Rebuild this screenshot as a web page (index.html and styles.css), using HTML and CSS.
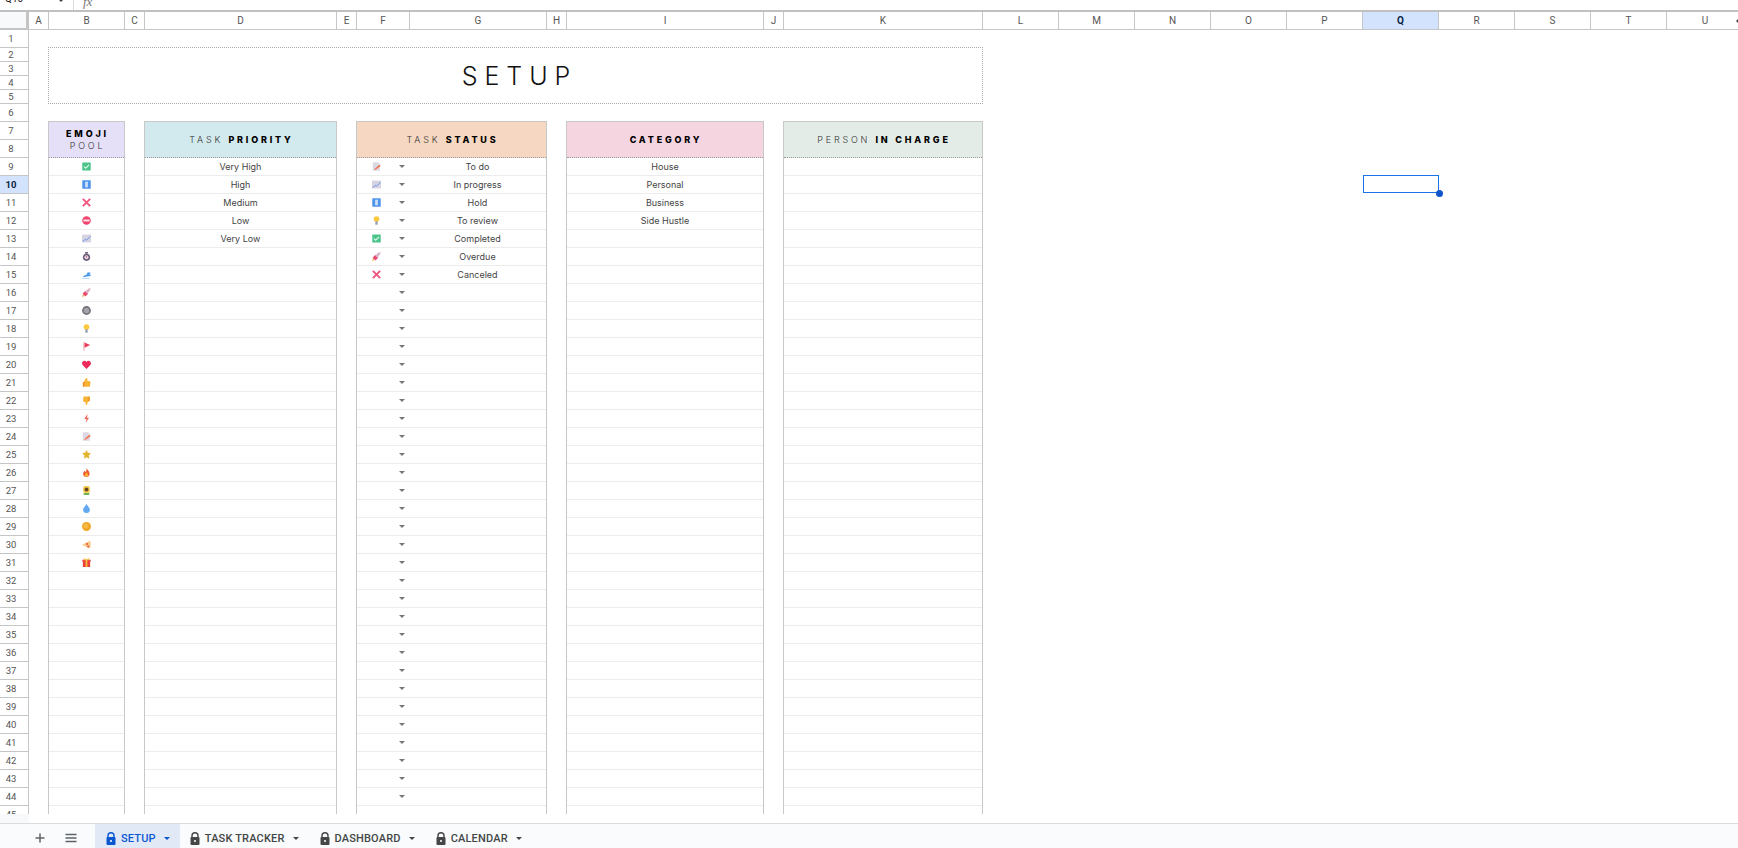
FILE: index.html
```html
<!DOCTYPE html>
<html lang="en">
<head>
<meta charset="utf-8">
<title>Setup</title>
<link rel="stylesheet" href="styles.css">
</head>
<body>
<svg class="defs" aria-hidden="true">
  <symbol id="i-check" viewBox="0 0 16 16"><rect x="0.500" y="1" width="15" height="14" rx="1" fill="#4cc38a"/><path d="M3.500 8l3 3 6-6" fill="none" stroke="#e8fff2" stroke-width="1.800"/></symbol>
  <symbol id="i-pause" viewBox="0 0 16 16"><rect x="0.500" y="0.500" width="15" height="15" rx="1" fill="#4f94ea"/><rect x="5.500" y="3" width="5" height="10" fill="#c9dffb"/></symbol>
  <symbol id="i-x" viewBox="0 0 16 16"><path d="M1.500 1.500l13 13M14.500 1.500l-13 13" stroke="#f2587f" stroke-width="3.600" fill="none"/></symbol>
  <symbol id="i-stop" viewBox="0 0 16 16"><circle cx="8" cy="8" r="7.600" fill="#f0456f"/><rect x="2.500" y="6.300" width="11" height="3.400" fill="#fde4ea"/></symbol>
  <symbol id="i-chart" viewBox="0 0 16 16"><rect x="0" y="1" width="16" height="14" fill="#d8d3e2"/><path d="M1 13.500l5-4 2 1.500 7-7" fill="none" stroke="#5a8ee8" stroke-width="1.600"/></symbol>
  <symbol id="i-watch" viewBox="0 0 16 16"><rect x="5.500" y="0" width="5" height="3" fill="#6b5c78"/><circle cx="8" cy="9.500" r="6.400" fill="#6b5c78"/><circle cx="8" cy="9.500" r="3.600" fill="#e2d6e2"/><path d="M8 9.500V7" stroke="#d8446a" stroke-width="1.500"/></symbol>
  <symbol id="i-shoe" viewBox="0 0 16 16"><path d="M0.500 13l5-4 3-1 1.500-4 5.500 1-2 3 2 1v1.500l-6 1z" fill="#4d9cec"/><path d="M1 15h12" stroke="#a9cff5" stroke-width="1.500"/></symbol>
  <symbol id="i-rocket" viewBox="0 0 16 16"><path d="M1 10l5-5 5 5-5 5z" fill="#ea4a70"/><path d="M5.500 6l5.500-4.500 4.500-1.500-1.500 4.500-4.500 5.500z" fill="#d9b4c8"/><path d="M0 16l2-4.500 2.500 2.500z" fill="#f3a13a"/></symbol>
  <symbol id="i-circle" viewBox="0 0 16 16"><circle cx="8" cy="8" r="7.800" fill="#6f6f78"/><circle cx="8" cy="8" r="5" fill="#a3a3aa"/></symbol>
  <symbol id="i-bulb" viewBox="0 0 16 16"><circle cx="8" cy="5.500" r="5" fill="#fcc83e"/><rect x="6" y="9.500" width="4" height="6" fill="#8f9db5"/></symbol>
  <symbol id="i-flag" viewBox="0 0 16 16"><rect x="2.500" y="0.500" width="2" height="15" fill="#f3a8a8"/><path d="M4.500 1l10 4.500-10 4.500z" fill="#ec3a5c"/></symbol>
  <symbol id="i-heart" viewBox="0 0 16 16"><path d="M8 16L1 9C-1.500 5 1.500 1 5 1.500 6.500 1.700 7.500 2.500 8 3.500 8.500 2.500 9.500 1.700 11 1.500 14.500 1 17.500 5 15 9z" fill="#ee2a5c"/></symbol>
  <symbol id="i-up" viewBox="0 0 16 16"><path d="M7 0l2.500 1v4.500H14l1 2-1 8H4.500l-1-1V6.500z" fill="#f7b334"/><rect x="1.500" y="7" width="3" height="8.500" fill="#ef8c2c"/></symbol>
  <symbol id="i-down" viewBox="0 0 16 16"><path d="M2.500 1H11l2.500 1v7l-3.500 2-1 5-2.500-1v-4.500H3L2 8.500z" fill="#f7b334"/><rect x="10.500" y="1" width="3.500" height="8" fill="#ef9c2c"/></symbol>
  <symbol id="i-bolt" viewBox="0 0 16 16"><path d="M9.500 0L4 9h4l-1.500 7 6-9.500H9z" fill="#f0695a"/></symbol>
  <symbol id="i-memo" viewBox="0 0 16 16"><path d="M1.500 0.500h9.500l3 3v12H1.500z" fill="#dcd8e4"/><path d="M5 12l8-7 2.500 2-8 6-3.500 1.500z" fill="#f0704a"/></symbol>
  <symbol id="i-star" viewBox="0 0 16 16"><path d="M8 0l2.500 5 5.500.8-4 3.900 1.200 5.800L8 12.800l-4.700 2.700 1.200-5.800-4.500-3.900 5.500-.8z" fill="#e3b52c"/></symbol>
  <symbol id="i-fire" viewBox="0 0 16 16"><path d="M8 0c1 3 5.500 5 5.500 10 0 3.500-2.800 6-5.800 6S2 13.500 2 10.500C2 8 3.500 7 4 5c1 .5 1.500 1.500 2 2.500C7.500 6 8.500 3 8 0z" fill="#ee5a32"/><path d="M8 7.500c.5 1.500 3 2.500 3 5s-2 3.200-3.500 3.200-3-1.200-2.500-3.200S7.500 9.500 8 7.500z" fill="#f9b233"/></symbol>
  <symbol id="i-sun" viewBox="0 0 16 16"><rect x="2" y="0" width="12" height="12.500" rx="3" fill="#f4cf52"/><circle cx="8" cy="6.300" r="3.500" fill="#6a4322"/><rect x="3" y="12.500" width="10" height="3.500" fill="#6db25a"/></symbol>
  <symbol id="i-drop" viewBox="0 0 16 16"><path d="M8 0c2 4 6 6.500 6 10.300A6 5.700 0 0 1 2 10.300C2 6.500 6 4 8 0z" fill="#62a9f2"/></symbol>
  <symbol id="i-orange" viewBox="0 0 16 16"><circle cx="8" cy="8" r="7.900" fill="#f1a628"/><circle cx="7" cy="7" r="4" fill="#f6bb45"/></symbol>
  <symbol id="i-pizza" viewBox="0 0 16 16"><path d="M0 8.500L14 1.500c2 4 2 9 0 13.500z" fill="#f8c98a"/><circle cx="9" cy="7" r="1.700" fill="#e8503a"/><circle cx="11" cy="11.500" r="1.700" fill="#e8503a"/></symbol>
  <symbol id="i-gift" viewBox="0 0 16 16"><rect x="1.500" y="5" width="13" height="11" fill="#e9423a"/><rect x="0.500" y="3" width="15" height="3.500" fill="#f04f3f"/><rect x="6.500" y="3" width="3" height="13" fill="#f7c23a"/><path d="M3.500 0l4.500 2.500L12.500 0v3h-9z" fill="#f7c23a"/></symbol>
  <symbol id="i-lock" viewBox="0 0 10 13"><path d="M2 5.500V3.700a3 3 0 0 1 6 0v1.800" fill="none" stroke="currentColor" stroke-width="1.400"/><rect x="0.500" y="5" width="9" height="8" rx="1" fill="currentColor"/><circle cx="5" cy="9" r="1" fill="#fff"/></symbol>
</svg>

<div class="app">
  <div class="topbar">
    <div class="namebox"><span class="namebox-text">Q10</span><span class="namebox-caret"></span></div>
    <div class="fx"><em>fx</em></div>
  </div>

  <div class="colhead">
    <div class="corner"></div>
    <div class="ch w20">A</div><div class="ch w76">B</div><div class="ch w20">C</div><div class="ch w192">D</div>
    <div class="ch w20">E</div><div class="ch w53">F</div><div class="ch w137">G</div><div class="ch w20">H</div>
    <div class="ch w197">I</div><div class="ch w20">J</div><div class="ch w199">K</div><div class="ch w76">L</div>
    <div class="ch w76">M</div><div class="ch w76">N</div><div class="ch w76">O</div><div class="ch w76">P</div>
    <div class="ch w76 ch-on">Q</div><div class="ch w76">R</div><div class="ch w76">S</div><div class="ch w76">T</div>
    <div class="ch w76 ch-last">U<span class="scroll-arrow"></span></div>
  </div>

  <div class="main">
    <div class="rownums">
      <div class="rn">1</div><div class="rn rn-s">2</div><div class="rn rn-s">3</div><div class="rn rn-s">4</div><div class="rn rn-s">5</div>
      <div class="rn">6</div><div class="rn">7</div><div class="rn">8</div><div class="rn">9</div><div class="rn rn-on">10</div>
      <div class="rn">11</div><div class="rn">12</div><div class="rn">13</div><div class="rn">14</div><div class="rn">15</div>
      <div class="rn">16</div><div class="rn">17</div><div class="rn">18</div><div class="rn">19</div><div class="rn">20</div>
      <div class="rn">21</div><div class="rn">22</div><div class="rn">23</div><div class="rn">24</div><div class="rn">25</div>
      <div class="rn">26</div><div class="rn">27</div><div class="rn">28</div><div class="rn">29</div><div class="rn">30</div>
      <div class="rn">31</div><div class="rn">32</div><div class="rn">33</div><div class="rn">34</div><div class="rn">35</div>
      <div class="rn">36</div><div class="rn">37</div><div class="rn">38</div><div class="rn">39</div><div class="rn">40</div>
      <div class="rn">41</div><div class="rn">42</div><div class="rn">43</div><div class="rn">44</div><div class="rn">45</div>
    </div>

    <div class="canvas">
      <div class="title">SETUP</div>
      <div class="tables">
        <section class="tbl tbl-emoji">
          <header class="th th-lilac"><div><b>EMOJI</b><br><span>POOL</span></div></header>
          <div class="rows">
            <div class="row"><svg class="ico"><use href="#i-check"/></svg></div>
            <div class="row"><svg class="ico"><use href="#i-pause"/></svg></div>
            <div class="row"><svg class="ico"><use href="#i-x"/></svg></div>
            <div class="row"><svg class="ico"><use href="#i-stop"/></svg></div>
            <div class="row"><svg class="ico"><use href="#i-chart"/></svg></div>
            <div class="row"><svg class="ico"><use href="#i-watch"/></svg></div>
            <div class="row"><svg class="ico"><use href="#i-shoe"/></svg></div>
            <div class="row"><svg class="ico"><use href="#i-rocket"/></svg></div>
            <div class="row"><svg class="ico"><use href="#i-circle"/></svg></div>
            <div class="row"><svg class="ico"><use href="#i-bulb"/></svg></div>
            <div class="row"><svg class="ico"><use href="#i-flag"/></svg></div>
            <div class="row"><svg class="ico"><use href="#i-heart"/></svg></div>
            <div class="row"><svg class="ico"><use href="#i-up"/></svg></div>
            <div class="row"><svg class="ico"><use href="#i-down"/></svg></div>
            <div class="row"><svg class="ico"><use href="#i-bolt"/></svg></div>
            <div class="row"><svg class="ico"><use href="#i-memo"/></svg></div>
            <div class="row"><svg class="ico"><use href="#i-star"/></svg></div>
            <div class="row"><svg class="ico"><use href="#i-fire"/></svg></div>
            <div class="row"><svg class="ico"><use href="#i-sun"/></svg></div>
            <div class="row"><svg class="ico"><use href="#i-drop"/></svg></div>
            <div class="row"><svg class="ico"><use href="#i-orange"/></svg></div>
            <div class="row"><svg class="ico"><use href="#i-pizza"/></svg></div>
            <div class="row"><svg class="ico"><use href="#i-gift"/></svg></div>
          </div>
        </section>

        <section class="tbl tbl-priority">
          <header class="th th-teal"><div><span>TASK</span> <b>PRIORITY</b></div></header>
          <div class="rows">
            <div class="row">Very High</div>
            <div class="row">High</div>
            <div class="row">Medium</div>
            <div class="row">Low</div>
            <div class="row">Very Low</div>
          </div>
        </section>

        <section class="tbl tbl-status">
          <header class="th th-peach"><div><span>TASK</span> <b>STATUS</b></div></header>
          <div class="rows">
            <div class="srow"><svg class="ico"><use href="#i-memo"/></svg><i class="caret"></i><span class="stext">To do</span></div>
            <div class="srow"><svg class="ico"><use href="#i-chart"/></svg><i class="caret"></i><span class="stext">In progress</span></div>
            <div class="srow"><svg class="ico"><use href="#i-pause"/></svg><i class="caret"></i><span class="stext">Hold</span></div>
            <div class="srow"><svg class="ico"><use href="#i-bulb"/></svg><i class="caret"></i><span class="stext">To review</span></div>
            <div class="srow"><svg class="ico"><use href="#i-check"/></svg><i class="caret"></i><span class="stext">Completed</span></div>
            <div class="srow"><svg class="ico"><use href="#i-rocket"/></svg><i class="caret"></i><span class="stext">Overdue</span></div>
            <div class="srow"><svg class="ico"><use href="#i-x"/></svg><i class="caret"></i><span class="stext">Canceled</span></div>
            <div class="srow"><i class="caret caret-empty"></i></div><div class="srow"><i class="caret caret-empty"></i></div><div class="srow"><i class="caret caret-empty"></i></div>
            <div class="srow"><i class="caret caret-empty"></i></div><div class="srow"><i class="caret caret-empty"></i></div><div class="srow"><i class="caret caret-empty"></i></div>
            <div class="srow"><i class="caret caret-empty"></i></div><div class="srow"><i class="caret caret-empty"></i></div><div class="srow"><i class="caret caret-empty"></i></div>
            <div class="srow"><i class="caret caret-empty"></i></div><div class="srow"><i class="caret caret-empty"></i></div><div class="srow"><i class="caret caret-empty"></i></div>
            <div class="srow"><i class="caret caret-empty"></i></div><div class="srow"><i class="caret caret-empty"></i></div><div class="srow"><i class="caret caret-empty"></i></div>
            <div class="srow"><i class="caret caret-empty"></i></div><div class="srow"><i class="caret caret-empty"></i></div><div class="srow"><i class="caret caret-empty"></i></div>
            <div class="srow"><i class="caret caret-empty"></i></div><div class="srow"><i class="caret caret-empty"></i></div><div class="srow"><i class="caret caret-empty"></i></div>
            <div class="srow"><i class="caret caret-empty"></i></div><div class="srow"><i class="caret caret-empty"></i></div><div class="srow"><i class="caret caret-empty"></i></div>
            <div class="srow"><i class="caret caret-empty"></i></div><div class="srow"><i class="caret caret-empty"></i></div><div class="srow"><i class="caret caret-empty"></i></div>
            <div class="srow"><i class="caret caret-empty"></i></div><div class="srow"><i class="caret caret-empty"></i></div>
          </div>
        </section>

        <section class="tbl tbl-category">
          <header class="th th-pink"><div><b>CATEGORY</b></div></header>
          <div class="rows">
            <div class="row">House</div>
            <div class="row">Personal</div>
            <div class="row">Business</div>
            <div class="row">Side Hustle</div>
          </div>
        </section>

        <section class="tbl tbl-person">
          <header class="th th-sage"><div><span>PERSON</span> <b>IN CHARGE</b></div></header>
          <div class="rows"></div>
        </section>
      </div>
    </div>
  </div>

  <div class="gutter"><div class="gutter-left"></div></div>

  <div class="tabbar">
    <div class="tb-add">
      <svg class="tb-ico" viewBox="0 0 12 12"><path d="M6 1.500v9M1.500 6h9" stroke="#5f6368" stroke-width="1.500" fill="none"/></svg>
    </div>
    <div class="tb-menu">
      <svg class="tb-ico" viewBox="0 0 12 12"><path d="M.5 2.500h11M.5 6h11M.5 9.500h11" stroke="#5f6368" stroke-width="1.300" fill="none"/></svg>
    </div>
    <div class="tab tab-on"><svg class="lock"><use href="#i-lock"/></svg><span>SETUP</span><i class="tab-caret"></i></div>
    <div class="tab"><svg class="lock"><use href="#i-lock"/></svg><span>TASK TRACKER</span><i class="tab-caret"></i></div>
    <div class="tab"><svg class="lock"><use href="#i-lock"/></svg><span>DASHBOARD</span><i class="tab-caret"></i></div>
    <div class="tab"><svg class="lock"><use href="#i-lock"/></svg><span>CALENDAR</span><i class="tab-caret"></i></div>
  </div>

  <div class="selection"><span class="handle"></span></div>
</div>
</body>
</html>
```

FILE: styles.css
```css
* { box-sizing: border-box; }
html, body { margin: 0; padding: 0; background: #fff; }
.defs { position: absolute; width: 0; height: 0; }
.app { position: relative; width: 1738px; height: 848px; overflow: hidden; display: flex; flex-direction: column; font-family: "Inter", "Liberation Sans", sans-serif; color: #3c3c3c; }

/* formula bar sliver */
.topbar { height: 10px; display: flex; overflow: hidden; flex: none; }
.namebox { width: 74px; position: relative; border-right: 1px solid #dadce0; font: 10px "Roboto", sans-serif; color: #222; }
.namebox-text { position: absolute; left: 5px; top: -7px; }
.namebox-caret { position: absolute; left: 59px; top: 0; border: 2.5px solid transparent; border-top-color: #444; }
.fx { padding-left: 9px; font: italic 13px "Liberation Serif", serif; color: #777; margin-top: -6px; }
.fx em { font-style: italic; }

/* column letters */
.colhead { height: 20px; flex: none; display: flex; border-top: 2px solid #c0c0c0; border-bottom: 1px solid #c6c6c6; background: #fff; }
.corner { width: 29px; flex: none; background: #f8f9fa; border-right: 3px solid #c4c4c4; border-bottom: 2px solid #c4c4c4; margin-bottom: -1px; }
.ch { flex: none; display: flex; align-items: center; justify-content: center; border-right: 1px solid #c6c6c6; font: 10px "Roboto", "Liberation Sans", sans-serif; color: #555; }
.ch-on { background: #d3e3fd; color: #0b1f44; font-weight: 700; }
.ch-last { border-right: 0; position: relative; }
.scroll-arrow { position: absolute; right: 3px; top: 5px; border: 4px solid transparent; border-right-color: #444; border-left-width: 0; }
.w20 { width: 20px; } .w53 { width: 53px; } .w76 { width: 76px; } .w137 { width: 137px; }
.w192 { width: 192px; } .w197 { width: 197px; } .w199 { width: 199px; }

/* body */
.main { height: 784px; flex: none; display: flex; overflow: hidden; }
.rownums { width: 29px; flex: none; border-right: 1px solid #c6c6c6; }
.rn { height: 18px; padding-right: 6px; display: flex; align-items: center; justify-content: center; border-bottom: 1px solid #c6c6c6; font: 9.500px "Roboto", "Liberation Sans", sans-serif; color: #555; }
.rn-s { height: 14px; }
.rn-on { background: #d3e3fd; color: #0b1f44; font-weight: 700; }

.canvas { flex: 1; padding-left: 19px; min-width: 0; }
.title { width: 935px; height: 57px; margin-top: 17px; padding-left: 8px; border: 1px dotted #a8a8a8; display: flex; align-items: center; justify-content: center; font-family: "Inter", sans-serif; font-weight: 300; font-size: 25px; letter-spacing: 7px; color: #111; }
.tables { display: flex; gap: 19px; margin-top: 17px; align-items: flex-start; }
.tbl { border: 1px solid #c8c8c8; border-bottom: 0; flex: none; }
.tbl-emoji { width: 77px; } .tbl-priority { width: 193px; } .tbl-status { width: 191px; }
.tbl-category { width: 198px; } .tbl-person { width: 200px; }

.th { height: 36px; padding-left: 2px; border-bottom: 1px dotted #9a9a9a; display: flex; align-items: center; justify-content: center; text-align: center; font-size: 9px; line-height: 12px; letter-spacing: 2.800px; color: #333; font-weight: 300; }
.th b { font-weight: 800; color: #000; }
.th-lilac { background: #e5e0f7; } .th-teal { background: #d2e9ed; } .th-peach { background: #f6d7c1; }
.th-pink { background: #f5d5e0; } .th-sage { background: #e3ece7; }

.rows { height: 660px; background: repeating-linear-gradient(to bottom, #fff 0, #fff 17px, #ececec 17px, #ececec 18px); }
.row { height: 18px; padding-bottom: 1px; display: flex; align-items: center; justify-content: center; font-size: 9px; color: #444; }
.ico { width: 9px; height: 9px; flex: none; display: block; }
.srow { height: 18px; padding: 0 0 1px 15px; display: flex; align-items: center; font-size: 9px; color: #444; }
.caret { width: 0; height: 0; margin-left: 18px; border: 3px solid transparent; border-top-color: #777; border-bottom-width: 0; flex: none; }
.caret-empty { margin-left: 27px; }
.stext { width: 137px; margin-left: 4px; text-align: center; }

/* bottom */
.gutter { height: 9px; flex: none; background: #fff; }
.gutter-left { width: 29px; height: 9px; background: #f8f9fa; }
.tabbar { height: 25px; flex: none; display: flex; align-items: stretch; background: #f9fbfd; border-top: 1px solid #dadce0; font: 500 11px "Roboto", "Liberation Sans", sans-serif; letter-spacing: .17px; color: #444746; }
.tb-add { width: 56px; padding: 3px 0 0 34px; display: flex; align-items: center; }
.tb-menu { width: 39px; padding: 3px 0 0 9px; display: flex; align-items: center; }
.tb-ico { width: 12px; height: 12px; display: block; }
.tab { display: flex; align-items: center; padding: 5px 11px 0 10px; }
.tab-on { background: #e1e9f7; color: #0b57d0; padding-left: 11px; padding-right: 10px; }
.lock { width: 10px; height: 13px; margin-right: 5px; flex: none; }
.tab-caret { width: 0; height: 0; margin-left: 8px; border: 3.500px solid transparent; border-top-color: currentColor; border-bottom-width: 0; }

/* cell cursor over the sheet */
.selection { position: absolute; left: 1363px; top: 175px; width: 76px; height: 18px; border: 1px solid #1a73e8; }
.handle { position: absolute; right: -5px; bottom: -5px; width: 7px; height: 7px; border-radius: 50%; background: #1155cc; }
```
